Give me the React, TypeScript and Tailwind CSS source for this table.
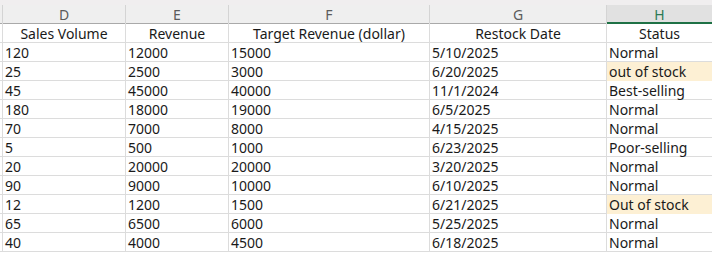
import React from "react";

type Row = [string, string, string, string, string, boolean?];

const rows: Row[] = [
  ["120", "12000", "15000", "5/10/2025", "Normal"],
  ["25", "2500", "3000", "6/20/2025", "out of stock", true],
  ["45", "45000", "40000", "11/1/2024", "Best-selling"],
  ["180", "18000", "19000", "6/5/2025", "Normal"],
  ["70", "7000", "8000", "4/15/2025", "Normal"],
  ["5", "500", "1000", "6/23/2025", "Poor-selling"],
  ["20", "20000", "20000", "3/20/2025", "Normal"],
  ["90", "9000", "10000", "6/10/2025", "Normal"],
  ["12", "1200", "1500", "6/21/2025", "Out of stock", true],
  ["65", "6500", "6000", "5/25/2025", "Normal"],
  ["40", "4000", "4500", "6/18/2025", "Normal"],
];

const cols = "grid grid-cols-[3px_123px_103px_201px_177px_1fr]";
const font = { fontFamily: '"Noto Sans", "Liberation Sans", sans-serif' };

export default function App() {
  return (
    <div className="w-[712px] h-[255px] overflow-hidden bg-white text-[14px] text-[#1a1a1a]" style={font}>
      <div className="h-[5px] bg-[#f0eeef]" />
      <div className={`${cols} h-[18px] bg-[#efefef] text-[#5b5b5b] leading-none`}>
        <div className="border-r border-b border-r-[#d4d4d4] border-b-[#a9a9a9]" />
        <div className="border-r border-b border-r-[#d4d4d4] border-b-[#a9a9a9] flex items-center justify-center pt-[2px]">D</div>
        <div className="border-r border-b border-r-[#d4d4d4] border-b-[#a9a9a9] flex items-center justify-center pt-[2px]">E</div>
        <div className="border-r border-b border-r-[#d4d4d4] border-b-[#a9a9a9] flex items-center justify-center pt-[2px]">F</div>
        <div className="border-r border-b border-r-[#d4d4d4] border-b-[#a9a9a9] flex items-center justify-center pt-[2px]">G</div>
        <div className="border-b-2 border-b-[#1e7145] bg-[#e1e1e1] text-[#2c7a55] flex items-center justify-center pt-[3px]">H</div>
      </div>
      <div className={`${cols} h-[20px] leading-none`}>
        <div className="border-r border-b border-[#dcdcdc]" />
        <div className="border-r border-b border-[#dcdcdc] flex items-center justify-center pt-[2px]">Sales Volume</div>
        <div className="border-r border-b border-[#dcdcdc] flex items-center justify-center pt-[2px]">Revenue</div>
        <div className="border-r border-b border-[#dcdcdc] flex items-center justify-center pt-[2px]">Target Revenue (dollar)</div>
        <div className="border-r border-b border-[#dcdcdc] flex items-center justify-center pt-[2px]">Restock Date</div>
        <div className="border-b border-[#dcdcdc] flex items-center justify-center pt-[2px]">Status</div>
      </div>
      {rows.map((r, i) => (
        <div key={i} className={`${cols} h-[19px] leading-none`}>
          <div className="border-r border-b border-[#dcdcdc]" />
          <div className="border-r border-b border-[#dcdcdc] flex items-center pl-[2px] pt-[2px]">{r[0]}</div>
          <div className="border-r border-b border-[#dcdcdc] flex items-center pl-[2px] pt-[2px]">{r[1]}</div>
          <div className="border-r border-b border-[#dcdcdc] flex items-center pl-[2px] pt-[2px]">{r[2]}</div>
          <div className="border-r border-b border-[#dcdcdc] flex items-center pl-[2px] pt-[2px]">{r[3]}</div>
          <div
            className={
              r[5]
                ? "border-b border-[#fdf0d4] bg-[#fdf0d4] flex items-center pl-[2px] pt-[2px]"
                : "border-b border-[#dcdcdc] flex items-center pl-[2px] pt-[2px]"
            }
          >
            {r[4]}
          </div>
        </div>
      ))}
    </div>
  );
}
